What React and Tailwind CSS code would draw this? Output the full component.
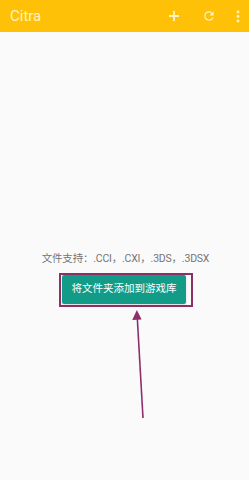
export default function App() {
  return (
    <div
      className="relative w-[249px] h-[480px] bg-[#fafafa] overflow-hidden"
      style={{ fontFamily: '"Roboto", "Noto Sans CJK SC", sans-serif' }}
    >
      {/* Toolbar */}
      <div className="h-[32px] bg-[#ffc107] flex items-center pl-[10px] pr-[9px]">
        <span className="text-[15px] text-[#fff3c4] leading-none">Citra</span>
        <div className="ml-auto flex items-center text-[#fff3c4]">
          <svg width="12" height="12" viewBox="0 0 12 12">
            <path d="M6 1v10M1 6h10" stroke="currentColor" strokeWidth="1.8" />
          </svg>
          <svg className="ml-[22px]" width="14" height="14" viewBox="0 0 24 24">
            <path
              d="M17.65 6.35A7.96 7.96 0 0 0 12 4a8 8 0 1 0 7.73 10h-2.08A6 6 0 1 1 12 6c1.66 0 3.14.69 4.22 1.78L13 11h7V4l-2.35 2.35z"
              fill="currentColor"
            />
          </svg>
          <svg className="ml-[20px]" width="4" height="13" viewBox="0 0 4 13">
            <circle cx="2" cy="2" r="1.4" fill="currentColor" />
            <circle cx="2" cy="6.5" r="1.4" fill="currentColor" />
            <circle cx="2" cy="11" r="1.4" fill="currentColor" />
          </svg>
        </div>
      </div>

      {/* Empty state */}
      <div className="flex flex-col items-center pt-[222px]">
        <p className="ml-[2px] text-[10.5px] text-[#757575] leading-none tracking-[-0.2px]">
          文件支持：.CCI，.CXI，.3DS，.3DSX
        </p>
        <div className="mt-[8px] ml-[3px] border-2 border-[#8e2f6a] pl-[1px] pr-[5px] pt-[0px] pb-[1px]">
          <button className="w-[124px] h-[29px] bg-[#129c87] text-white text-[10.5px] rounded-[2px] shadow-sm">
            将文件夹添加到游戏库
          </button>
        </div>
      </div>

      {/* Annotation arrow */}
      <svg className="absolute left-0 top-0" width="249" height="480">
        <line x1="143" y1="418" x2="137.3" y2="318" stroke="#8e2f6a" strokeWidth="1.6" />
        <path d="M136.9 310 L132.2 320 L141.6 319.5 Z" fill="#8e2f6a" />
      </svg>
    </div>
  );
}
